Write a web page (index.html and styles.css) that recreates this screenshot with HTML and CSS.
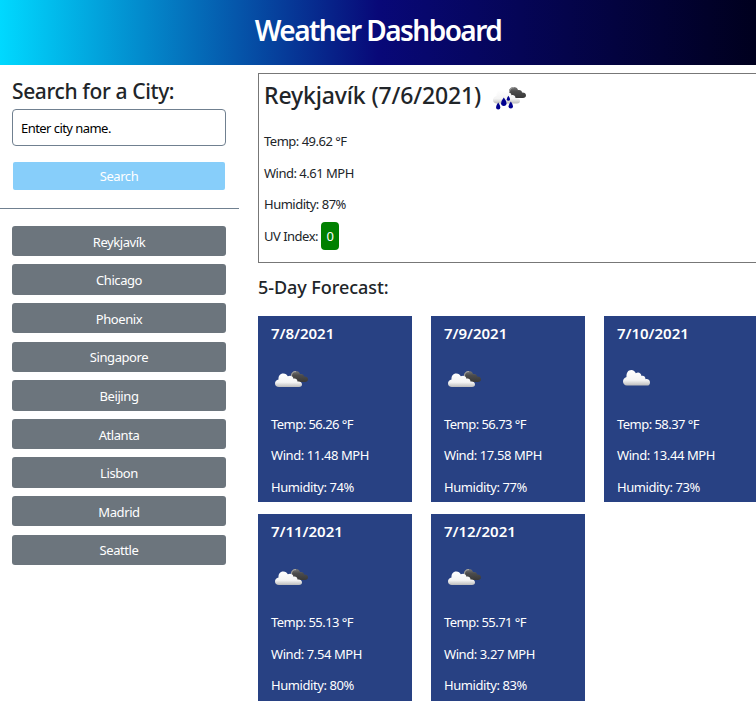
FILE: index.html
```html
<!DOCTYPE html>
<html lang="en">
<head>
<meta charset="utf-8">
<title>Weather Dashboard</title>
<link rel="stylesheet" href="styles.css">
</head>
<body>
<svg width="0" height="0" class="defs" aria-hidden="true">
  <defs>
    <linearGradient id="white" x1="0" y1="0" x2="0" y2="1"><stop offset="0" stop-color="#fff"/><stop offset=".65" stop-color="#f4f4f4"/><stop offset="1" stop-color="#bcbcbc"/></linearGradient>
    <linearGradient id="dark" x1="0" y1="0" x2="0" y2="1"><stop offset="0" stop-color="#777"/><stop offset=".4" stop-color="#4c4c4c"/><stop offset="1" stop-color="#383838"/></linearGradient>
    <path id="cloud" d="M4 17C1.500 17 0 15.500 0 13.500C0 11.500 1.300 10 3.500 9.500C3.300 6 5 3.500 8.300 3.500C10.500 3.500 12 4.600 12.800 6.300C15.500 5 18 6 18.500 8.800C20 8 22.500 9 22.500 11.500C25 11 27 12.300 27 14.300C27 16 26 17 24 17Z"/>
    <path id="back" d="M16 7C15.500 3.500 17.500 1 20.500 1C23 1 24.500 2.200 25 4C27.500 3.500 29 4.800 29 6.500C31.500 6.300 33 7.500 33 9.200C33 11 31.800 12 30 12H21C18 12 16.500 10 16 7Z"/>
    <symbol id="cloudy" viewBox="0 0 34 24"><use href="#back" fill="url(#dark)"/><path d="M16.500 6C16.500 3 18 1.400 21 1.600" fill="none" stroke="#aaa"/><use href="#cloud" fill="url(#white)"/></symbol>
    <symbol id="single" viewBox="0 0 34 24"><use href="#cloud" fill="url(#white)" transform="translate(0 -4) scale(1 1.15)"/></symbol>
    <symbol id="rain" viewBox="0 0 34 24"><use href="#back" fill="url(#dark)"/><path d="M16.500 6C16.500 3 18 1.400 21 1.600" fill="none" stroke="#aaa"/><use href="#cloud" fill="url(#white)" transform="translate(0 .5)"/><g fill="#00008f"><path d="M10.800 11.500Q13.500 15 13.500 17.200A2.700 2.700 0 0 1 8.100 17.200Q8.100 15 10.800 11.500Z"/><path d="M5.200 16.500Q7.400 19.500 7.400 21.200A2.200 2.200 0 0 1 3 21.200Q3 19.500 5.200 16.500Z"/><path d="M17.800 15.500Q20 18.500 20 20.200A2.200 2.200 0 0 1 15.600 20.200Q15.600 18.500 17.800 15.500Z"/><path d="M15.400 9.800Q17 12 17 13.200A1.600 1.600 0 0 1 13.800 13.200Q13.800 12 15.400 9.800Z"/></g></symbol>
  </defs>
</svg>
<header class="banner"><h1>Weather Dashboard</h1></header>
<div class="layout">
  <aside class="sidebar">
    <form class="search">
      <h2>Search for a City:</h2>
      <input type="text" placeholder="Enter city name." aria-label="City">
      <button type="button">Search</button>
    </form>
    <div class="history">
      <button>Reykjavík</button><button>Chicago</button><button>Phoenix</button><button>Singapore</button><button>Beijing</button><button>Atlanta</button><button>Lisbon</button><button>Madrid</button><button>Seattle</button>
    </div>
  </aside>
  <main class="content">
    <section class="today">
      <div class="today-title"><h2>Reykjavík (7/6/2021)</h2><svg class="icon"><use href="#rain"/></svg></div>
      <p>Temp: 49.62 °F</p><p>Wind: 4.61 MPH</p><p>Humidity: 87%</p><p>UV Index: <span class="uv">0</span></p>
    </section>
    <h3>5-Day Forecast:</h3>
    <section class="forecast">
      <article class="card"><h4>7/8/2021</h4><svg class="icon"><use href="#cloudy"/></svg><p>Temp: 56.26 °F</p><p>Wind: 11.48 MPH</p><p>Humidity: 74%</p></article>
      <article class="card"><h4>7/9/2021</h4><svg class="icon"><use href="#cloudy"/></svg><p>Temp: 56.73 °F</p><p>Wind: 17.58 MPH</p><p>Humidity: 77%</p></article>
      <article class="card"><h4>7/10/2021</h4><svg class="icon single"><use href="#single"/></svg><p>Temp: 58.37 °F</p><p>Wind: 13.44 MPH</p><p>Humidity: 73%</p></article>
      <article class="card"><h4>7/11/2021</h4><svg class="icon"><use href="#cloudy"/></svg><p>Temp: 55.13 °F</p><p>Wind: 7.54 MPH</p><p>Humidity: 80%</p></article>
      <article class="card"><h4>7/12/2021</h4><svg class="icon"><use href="#cloudy"/></svg><p>Temp: 55.71 °F</p><p>Wind: 3.27 MPH</p><p>Humidity: 83%</p></article>
    </section>
  </main>
</div>
</body>
</html>
```
FILE: styles.css
```css
* { box-sizing: border-box; }
body { margin: 0; height: 711px; overflow: hidden; background: #fff; color: #212529; font: 13px/20px "Noto Sans", sans-serif; letter-spacing: -.42px; }
h1, h2, h3, h4, p { margin: 0; font-weight: 500; }
p { font-weight: 400; }
.defs { display: block; height: 0; }
.banner { height: 65px; padding-top: 10px; text-align: center; background: linear-gradient(to right, #00d9ff, #080878 50%, #00001e); }
h1 { color: #fff; font-size: 28px; line-height: 41px; letter-spacing: -1.55px; font-weight: 600; }
.layout { display: flex; }
.sidebar { width: 239px; flex: none; }
.search { height: 144px; padding: 12px 13px 0 12px; border-bottom: 1px solid #708090; }
.search h2 { font-size: 21px; line-height: 29px; margin-bottom: 3px; letter-spacing: -.38px; }
.search input { display: block; width: 214px; height: 37px; padding: 0 8px; border: 1px solid #708090; border-radius: 4px; font: inherit; letter-spacing: -.55px; color: #000; }
.search input::placeholder { color: #000; opacity: 1; }
button { display: block; width: 214px; border: 0; padding: 0; font: inherit; letter-spacing: inherit; color: #fff; }
.search button { width: 212px; height: 28px; margin: 16px 0 0 1px; border-radius: 2px; background: #87cefa; }
.history { display: grid; gap: 8.1px; padding: 16.8px 13px 0 12px; }
.history button { height: 30.5px; padding-top: 1px; border-radius: 3px; background: #6c757d; }
.content { flex: none; width: 520px; padding: 8px 0 0 19px; }
.today { height: 190px; padding: 7px 5px; border: 1px solid #777; letter-spacing: -.5px; }
.today-title { display: flex; align-items: flex-start; height: 50px; }
.today-title h2 { font-size: 23px; line-height: 29px; letter-spacing: -.14px; }
.icon { display: block; width: 34px; height: 24px; overflow: visible; }
.today-title .icon { margin: 5px 0 0 12px; }
.today p { height: 31.7px; }
.uv { display: inline-block; height: 28px; width: 18px; margin-top: -4px; line-height: 29px; text-align: center; color: #fff; background: #008000; border-radius: 4px; }
h3 { height: 52.7px; padding-top: 11px; font-size: 18px; line-height: 27px; letter-spacing: -.06px; }
.forecast { display: grid; grid-template-columns: repeat(3, 154px); gap: 11.9px 19px; }
.card { height: 186.6px; padding: 6.3px 13px 0; color: #fff; background: #284183; }
.card h4 { font-size: 15px; line-height: 22px; font-weight: 600; letter-spacing: -.03px; }
.card .icon { margin: 26px 0 18.6px 4px; }
.card .single { margin-left: 6px; }
.card p { height: 31.5px; line-height: 23px; }
.card p:nth-of-type(1) { letter-spacing: -.54px; }
```
